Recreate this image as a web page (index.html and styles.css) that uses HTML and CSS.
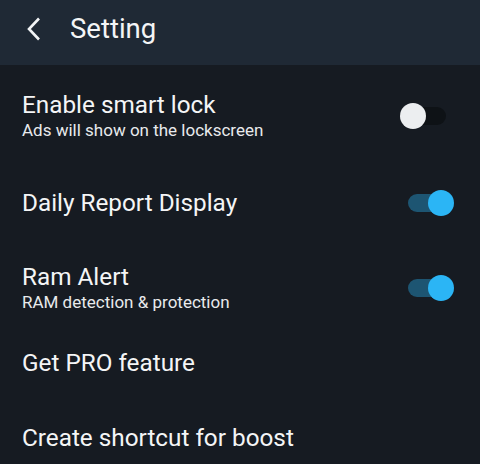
FILE: index.html
```html
<!DOCTYPE html>
<html>
<head>
<meta charset="utf-8">
<link rel="stylesheet" href="styles.css">
</head>
<body>
<div class="app">
  <header class="bar">
    <svg class="back" width="16" height="24" viewBox="0 0 16 24"><path d="M13 1.5 L3 12 L13 22.5" fill="none" stroke="#f2f4f6" stroke-width="2.6"/></svg>
    <span class="bar-title">Setting</span>
  </header>
  <div class="list">
    <div class="row gap-lg">
      <div class="texts">
        <div class="title">Enable smart lock</div>
        <div class="sub">Ads will show on the lockscreen</div>
      </div>
      <div class="switch off"><span class="track"></span><span class="knob"></span></div>
    </div>
    <div class="row gap-md">
      <div class="texts">
        <div class="title">Daily Report Display</div>
      </div>
      <div class="switch on"><span class="track"></span><span class="knob"></span></div>
    </div>
    <div class="row">
      <div class="texts">
        <div class="title">Ram Alert</div>
        <div class="sub">RAM detection &amp; protection</div>
      </div>
      <div class="switch on"><span class="track"></span><span class="knob"></span></div>
    </div>
    <div class="row">
      <div class="texts"><div class="title">Get PRO feature</div></div>
    </div>
    <div class="row">
      <div class="texts"><div class="title">Create shortcut for boost</div></div>
    </div>
  </div>
</div>
</body>
</html>
```
FILE: styles.css
```css
html, body { margin: 0; padding: 0; }
body {
  width: 480px;
  height: 464px;
  overflow: hidden;
  background: #161b22;
  font-family: Roboto, "Noto Sans", sans-serif;
  color: #f4f5f6;
}
.app { width: 480px; height: 464px; overflow: hidden; }
.bar {
  height: 65px;
  background: #1f2935;
  display: flex;
  align-items: center;
  padding: 0 0 7px 26px;
  box-sizing: border-box;
}
.back { display: block; margin-right: 28px; }
.bar-title { font-size: 27.5px; line-height: 30px; color: #f4f5f6; }
.list { padding-top: 13px; }
.row {
  height: 75px;
  display: flex;
  align-items: center;
  justify-content: space-between;
  padding: 0 26px 0 22px;
  box-sizing: border-box;
}
.row.gap-lg { margin-bottom: 12px; }
.row.gap-md { margin-bottom: 10px; }
.title { font-size: 24.3px; line-height: 28px; }
.sub { font-size: 17px; line-height: 22px; color: #e8eaec; }
.switch { position: relative; width: 54px; height: 26px; }
.track {
  position: absolute;
  left: 8px; right: 8px; top: 4px; height: 18px;
  border-radius: 9px;
}
.knob {
  position: absolute;
  top: 0;
  width: 26px; height: 26px;
  border-radius: 50%;
}
.switch.off .track { background: #0e1216; }
.switch.off .knob { left: 0; background: #eceef0; }
.switch.on .track { background: #1d5572; }
.switch.on .knob { right: 0; background: #2bb5f5; }
```
